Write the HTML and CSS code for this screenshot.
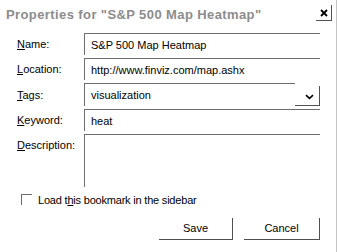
FILE: index.html
```html
<!DOCTYPE html>
<html>
<head>
<meta charset="utf-8">
<link rel="stylesheet" href="styles.css">
</head>
<body>
<div class="dialog">
  <div class="titlebar">
    <span class="title">Properties for "S&amp;P 500 Map Heatmap"</span>
    <span class="close"><svg width="8" height="8" viewBox="0 0 8 8"><path d="M1 1 L7 7 M7 1 L1 7" stroke="#000" stroke-width="1.8" fill="none"/></svg></span>
  </div>
  <div class="form">
    <span class="lbl"><u>N</u>ame:</span>
    <div class="field">S&amp;P 500 Map Heatmap</div>
    <span class="lbl"><u>L</u>ocation:</span>
    <div class="field">http://www.finviz.com/map.ashx</div>
    <span class="lbl"><u>T</u>ags:</span>
    <div class="combo">
      <div class="field">visualization</div>
      <span class="dd"><svg width="9" height="6" viewBox="0 0 9 6"><path d="M1 1.2 L4.5 4.4 L8 1.2" stroke="#000" stroke-width="1.6" fill="none"/></svg></span>
    </div>
    <span class="lbl"><u>K</u>eyword:</span>
    <div class="field">heat</div>
    <span class="lbl top"><u>D</u>escription:</span>
    <div class="field area"></div>
  </div>
  <div class="check">
    <span class="box"></span>
    <span class="check-text">Load t<u>h</u>is bookmark in the sidebar</span>
  </div>
  <div class="buttons">
    <span class="btn save">Save</span>
    <span class="btn cancel">Cancel</span>
  </div>
</div>
</body>
</html>
```
FILE: styles.css
```css
html, body {
  margin: 0;
  padding: 0;
  background: #fff;
}
body {
  font-family: "Liberation Sans", Arial, sans-serif;
  font-size: 11px;
  color: #000;
}
.dialog {
  width: 337px;
  height: 252px;
  box-sizing: border-box;
  border-right: 1px solid #c4c4c4;
  overflow: hidden;
}
.titlebar {
  display: flex;
  justify-content: space-between;
  align-items: flex-start;
  padding: 5px 4px 0 6px;
  height: 16px;
}
.title {
  margin-top: 2px;
  font-weight: bold;
  font-size: 13px;
  letter-spacing: 0.4px;
  line-height: 15px;
  color: #8c8c8c;
}
.close {
  box-sizing: content-box;
  width: 14px;
  height: 14px;
  padding: 1px 0 0 1px;
  border-right: 1px solid #505050;
  border-bottom: 1px solid #505050;
  display: flex;
  align-items: center;
  justify-content: center;
}
.form {
  margin-top: 12px;
  padding: 0 16px 0 17px;
  display: grid;
  grid-template-columns: 67px 1fr;
  grid-template-rows: 22px 22px 23px 22px 53px;
  row-gap: 3px;
  align-items: center;
}
.lbl {
  line-height: 22px;
  white-space: nowrap;
}
.lbl.top {
  align-self: start;
}
.field {
  height: 100%;
  box-sizing: border-box;
  border-top: 1px solid #6e6e6e;
  border-left: 1px solid #6e6e6e;
  padding: 0 6px;
  display: flex;
  align-items: center;
  white-space: nowrap;
  overflow: hidden;
}
.area {
  align-items: flex-start;
}
.combo {
  height: 100%;
  display: flex;
}
.combo .field {
  flex: 1;
}
.dd {
  width: 25px;
  box-sizing: border-box;
  margin-top: 3px;
  border-right: 1px solid #505050;
  border-bottom: 1px solid #505050;
  display: flex;
  align-items: center;
  justify-content: center;
  padding: 2px 0 0 4px;
}
.check {
  margin-top: 6px;
  height: 13px;
  display: flex;
  align-items: center;
  padding-left: 21px;
  gap: 6px;
  white-space: nowrap;
}
.check-text {
  letter-spacing: -0.2px;
}
.box {
  width: 11px;
  height: 11px;
  box-sizing: border-box;
  border-top: 1px solid #6e6e6e;
  border-left: 1px solid #6e6e6e;
}
.buttons {
  margin-top: 12px;
  display: flex;
  justify-content: flex-end;
  gap: 11px;
  padding-right: 16px;
}
.btn {
  height: 22px;
  box-sizing: border-box;
  border-right: 1px solid #505050;
  border-bottom: 1px solid #505050;
  display: flex;
  align-items: center;
  justify-content: center;
  padding-bottom: 1px;
}
.save {
  width: 74px;
}
.cancel {
  width: 76px;
}
```
